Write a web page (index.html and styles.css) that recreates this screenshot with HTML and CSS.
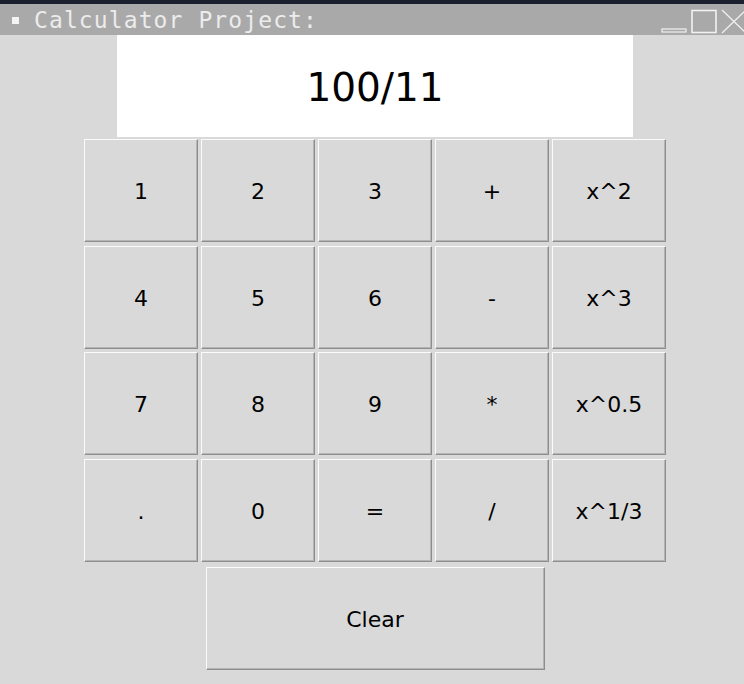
FILE: index.html
```html
<!DOCTYPE html>
<html>
<head>
<meta charset="utf-8">
<link rel="stylesheet" href="styles.css">
</head>
<body>
<div class="topstrip"></div>
<div class="titlebar">
  <span class="bullet"></span>
  <span class="title">Calculator Project:</span>
  <div class="controls">
    <svg width="86" height="28" viewBox="0 0 86 28">
      <rect x="2" y="22" width="24" height="3" fill="none" stroke="#f2f2f2" stroke-width="1.2"/>
      <rect x="32" y="3.5" width="24" height="22" fill="none" stroke="#f2f2f2" stroke-width="1.6"/>
      <path d="M62 3 L86 26 M86 3 L62 26" stroke="#f2f2f2" stroke-width="1.2"/>
    </svg>
  </div>
</div>
<main class="app">
  <div class="display">100/11</div>
  <div class="keys">
    <button class="key">1</button>
    <button class="key">2</button>
    <button class="key">3</button>
    <button class="key">+</button>
    <button class="key">x^2</button>
    <button class="key">4</button>
    <button class="key">5</button>
    <button class="key">6</button>
    <button class="key">-</button>
    <button class="key">x^3</button>
    <button class="key">7</button>
    <button class="key">8</button>
    <button class="key">9</button>
    <button class="key">*</button>
    <button class="key">x^0.5</button>
    <button class="key">.</button>
    <button class="key">0</button>
    <button class="key">=</button>
    <button class="key">/</button>
    <button class="key">x^1/3</button>
  </div>
  <div class="clear-row">
    <button class="key clear">Clear</button>
  </div>
</main>
</body>
</html>
```

FILE: styles.css
```css
html, body {
  margin: 0;
  padding: 0;
  background: #d9d9d9;
  width: 744px;
  height: 684px;
  overflow: hidden;
}

.topstrip {
  height: 4px;
  background: #1b2030;
}

.titlebar {
  height: 31px;
  background: #a9a9a9;
  display: flex;
  align-items: center;
  position: relative;
}

.bullet {
  width: 7px;
  height: 7px;
  background: #f4f4f4;
  margin-left: 12px;
  margin-right: 15px;
  margin-top: 2px;
}

.title {
  font-family: "DejaVu Sans Mono", monospace;
  font-size: 23px;
  letter-spacing: 1.1px;
  color: #ececec;
  line-height: 31px;
  padding-top: 1px;
}

.controls {
  position: absolute;
  right: -2px;
  top: 3px;
  line-height: 0;
}

.app {
  display: flex;
  flex-direction: column;
  padding-left: 84px;
}

.display {
  margin-left: 33px;
  width: 516px;
  height: 102px;
  background: #ffffff;
  font-family: "DejaVu Sans", sans-serif;
  font-size: 39px;
  color: #000;
  display: flex;
  align-items: center;
  justify-content: center;
  padding-top: 2px;
  box-sizing: border-box;
}

.keys {
  margin-top: 2px;
  display: grid;
  grid-template-columns: repeat(5, 114px);
  grid-auto-rows: 103px;
  column-gap: 3px;
  row-gap: 3.7px;
}

.key {
  margin: 0;
  padding: 2px 0 0 0;
  background: #d9d9d9;
  font-family: "DejaVu Sans", sans-serif;
  font-size: 22px;
  color: #000;
  border: 1px solid;
  border-color: #fbfbfb #8e8e8e #8e8e8e #fbfbfb;
  box-shadow: inset -1px -1px 0 #b4b4b4;
  box-sizing: border-box;
  cursor: default;
}

.clear-row {
  width: 582px;
  display: flex;
  justify-content: center;
  margin-top: 5px;
}

.clear {
  width: 339px;
  height: 103px;
}
```
